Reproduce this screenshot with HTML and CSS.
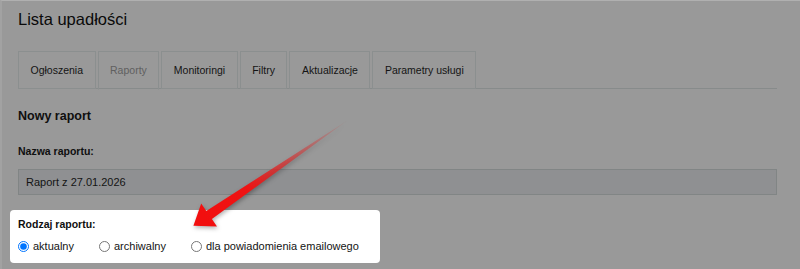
FILE: index.html
```html
<!DOCTYPE html>
<html lang="pl">
<head>
    <meta charset="UTF-8">
    <meta name="viewport" content="width=device-width, initial-scale=1.0">
    <title>Lista upadłości</title>
    <link rel="stylesheet" href="styles.css">
</head>
<body>
    <div class="page">
        <h1 class="page-title">Lista upadłości</h1>

        <ul class="tabs">
            <li class="tab">Ogłoszenia</li>
            <li class="tab active">Raporty</li>
            <li class="tab">Monitoringi</li>
            <li class="tab">Filtry</li>
            <li class="tab">Aktualizacje</li>
            <li class="tab">Parametry usługi</li>
        </ul>

        <h2 class="section-title">Nowy raport</h2>

        <label class="field-label" for="reportName">Nazwa raportu:</label>
        <input class="text-input" type="text" id="reportName" value="Raport z 27.01.2026">

        <div class="highlight">
            <div class="group-label">Rodzaj raportu:</div>
            <div class="radio-row">
                <label class="radio"><input type="radio" name="reportType" checked> aktualny</label>
                <label class="radio"><input type="radio" name="reportType"> archiwalny</label>
                <label class="radio"><input type="radio" name="reportType"> dla powiadomienia emailowego</label>
            </div>
        </div>
    </div>

    <!-- annotation arrow -->
    <svg class="arrow" width="800" height="269" viewBox="0 0 800 269">
        <defs>
            <linearGradient id="arrowFade" gradientUnits="userSpaceOnUse" x1="347" y1="121" x2="205" y2="218">
                <stop offset="0" stop-color="#e03030" stop-opacity="0.05"/>
                <stop offset="0.35" stop-color="#e02626" stop-opacity="0.55"/>
                <stop offset="0.7" stop-color="#ee1414" stop-opacity="1"/>
                <stop offset="1" stop-color="#f20f0f" stop-opacity="1"/>
            </linearGradient>
        </defs>
        <polygon points="347.4,120.4 211.9,219.1 217,226.6 193.4,225.7 201.2,203.4 206.3,210.9" fill="url(#arrowFade)"/>
    </svg>
</body>
</html>
```

FILE: styles.css
```css
* {
    margin: 0;
    padding: 0;
    box-sizing: border-box;
}

html,
body {
    background: #999999;
}

body {
    font-family: 'Liberation Sans', Arial, sans-serif;
    color: #0f0f0f;
    border-top: 1px solid #b0b0b0;
    border-left: 2px solid #a2a2a2;
    min-height: 100vh;
}

.page {
    padding: 8px 23px 0 16px;
}

.page-title {
    font-size: 16.5px;
    line-height: 20px;
    font-weight: 400;
    margin-bottom: 22px;
    color: #0a0a0a;
}

.tabs {
    display: flex;
    list-style: none;
    border-bottom: 1px solid #878b8b;
}

.tab {
    font-size: 10.5px;
    line-height: 14px;
    padding: 11px 11.5px;
    border: 1px solid #8b8f8f;
    margin-right: 2px;
    margin-bottom: -1px;
    color: #141414;
    white-space: nowrap;
}

.tab.active {
    color: #606060;
    border-bottom-color: #999999;
    padding-bottom: 12px;
    margin-bottom: -2px;
}

.section-title {
    font-size: 12.5px;
    line-height: 15px;
    font-weight: 700;
    margin-top: 20px;
}

.field-label {
    display: block;
    font-size: 10.5px;
    line-height: 13px;
    font-weight: 700;
    margin-top: 21px;
}

.text-input {
    display: block;
    width: 100%;
    height: 26px;
    margin-top: 11px;
    padding: 0 7px;
    border: 1px solid #818585;
    background: #8f9092;
    font-family: inherit;
    font-size: 11px;
    color: #141414;
}

.highlight {
    width: 370px;
    margin: 15px 0 0 -8px;
    padding: 8px 8px 10px;
    background: #ffffff;
    border-radius: 4px;
}

.group-label {
    font-size: 10.5px;
    line-height: 13px;
    font-weight: 700;
}

.radio-row {
    display: flex;
    margin-top: 8px;
}

.radio {
    display: flex;
    align-items: center;
    flex-shrink: 0;
    white-space: nowrap;
    font-size: 11px;
    line-height: 14px;
    margin-right: 25px;
    color: #141414;
}

.radio input {
    width: 11px;
    height: 11px;
    margin: 0 4px 0 0;
}

.arrow {
    position: absolute;
    top: 0;
    left: 0;
    pointer-events: none;
    filter: drop-shadow(1px 2px 2px rgba(0, 0, 0, 0.3));
}
```
